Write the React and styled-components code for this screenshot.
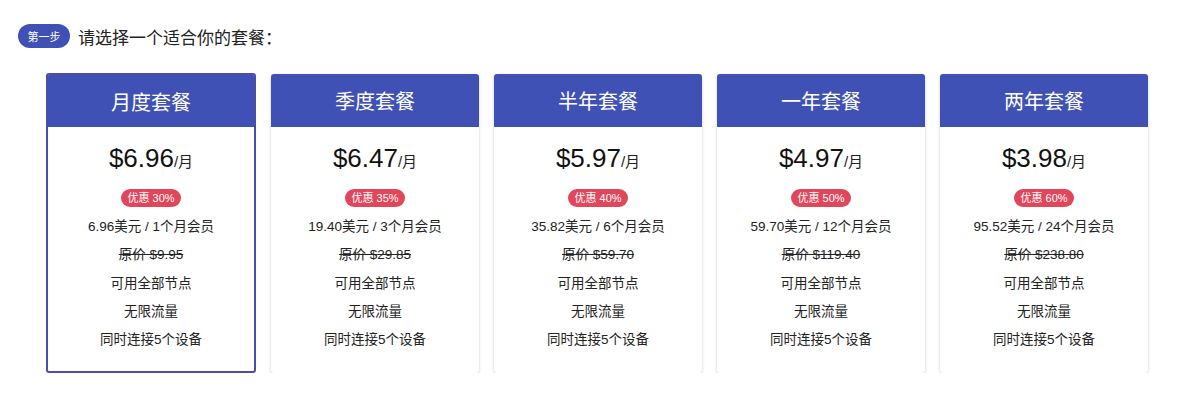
import React from "react";
import styled, { createGlobalStyle } from "styled-components";

const GlobalStyle = createGlobalStyle`
  body {
    margin: 0;
    background: #fff;
    font-family: "Liberation Sans", "Noto Sans CJK SC", sans-serif;
    color: #222;
  }
`;

// 页面容器
const Page = styled.div`
  padding: 24px 0 0 18px;
`;

// 步骤标题行
const StepRow = styled.div`
  display: flex;
  align-items: center;
  gap: 8px;
  height: 24px;
`;

const StepBadge = styled.span`
  display: inline-flex;
  align-items: center;
  justify-content: center;
  width: 52px;
  height: 24px;
  border-radius: 12px;
  background: #3f51b5;
  color: #fff;
  font-size: 11px;
`;

const StepTitle = styled.span`
  font-size: 17px;
  color: #222;
`;

// 套餐卡片网格
const Plans = styled.div`
  display: grid;
  grid-template-columns: 210px repeat(4, 208px);
  column-gap: 15px;
  margin: 25px 0 0 28px;
`;

const Card = styled.div`
  display: flex;
  flex-direction: column;
  background: #fff;
  border-radius: 3px;
  overflow: hidden;
  border: ${({ selected }) => (selected ? "2px solid #4b4f9f" : "none")};
  box-shadow: ${({ selected }) =>
    selected ? "none" : "0 1px 3px rgba(0, 0, 0, 0.22)"};
  margin-top: ${({ selected }) => (selected ? "0" : "1px")};
`;

const CardHeader = styled.div`
  height: ${({ selected }) => (selected ? "52px" : "53px")};
  display: flex;
  align-items: center;
  justify-content: center;
  background: #3f51b5;
  color: #fff;
  font-size: 20px;
`;

const CardBody = styled.div`
  display: flex;
  flex-direction: column;
  align-items: center;
  padding: 13px 0 17px;
`;

const Price = styled.div`
  height: 36px;
  display: flex;
  align-items: baseline;
  justify-content: center;
  line-height: 36px;
`;

const Amount = styled.span`
  font-size: 26px;
  color: #111;
`;

const Unit = styled.span`
  font-size: 15px;
  color: #222;
`;

const Discount = styled.span`
  margin-top: 13px;
  height: 18px;
  line-height: 18px;
  padding: 0 6px;
  border-radius: 9px;
  background: #e2465b;
  color: #fff;
  font-size: 11px;
`;

const Features = styled.ul`
  list-style: none;
  margin: 6px 0 0;
  padding: 0;
  text-align: center;
`;

const Feature = styled.li`
  line-height: 28.25px;
  font-size: 13.5px;
  color: #222;
  text-decoration: ${({ strike }) => (strike ? "line-through" : "none")};
`;

const plans = [
  { name: "月度套餐", price: "6.96", off: 30, total: "6.96", months: 1, orig: "9.95" },
  { name: "季度套餐", price: "6.47", off: 35, total: "19.40", months: 3, orig: "29.85" },
  { name: "半年套餐", price: "5.97", off: 40, total: "35.82", months: 6, orig: "59.70" },
  { name: "一年套餐", price: "4.97", off: 50, total: "59.70", months: 12, orig: "119.40" },
  { name: "两年套餐", price: "3.98", off: 60, total: "95.52", months: 24, orig: "238.80" },
];

const App = () => {
  return (
    <Page>
      <GlobalStyle />
      <StepRow>
        <StepBadge>第一步</StepBadge>
        <StepTitle>请选择一个适合你的套餐：</StepTitle>
      </StepRow>
      <Plans>
        {plans.map((p, i) => (
          <Card key={p.name} selected={i === 0}>
            <CardHeader selected={i === 0}>{p.name}</CardHeader>
            <CardBody>
              <Price>
                <Amount>${p.price}</Amount>
                <Unit>/月</Unit>
              </Price>
              <Discount>优惠 {p.off}%</Discount>
              <Features>
                <Feature>
                  {p.total}美元 / {p.months}个月会员
                </Feature>
                <Feature strike>原价 ${p.orig}</Feature>
                <Feature>可用全部节点</Feature>
                <Feature>无限流量</Feature>
                <Feature>同时连接5个设备</Feature>
              </Features>
            </CardBody>
          </Card>
        ))}
      </Plans>
    </Page>
  );
};

export default App;
